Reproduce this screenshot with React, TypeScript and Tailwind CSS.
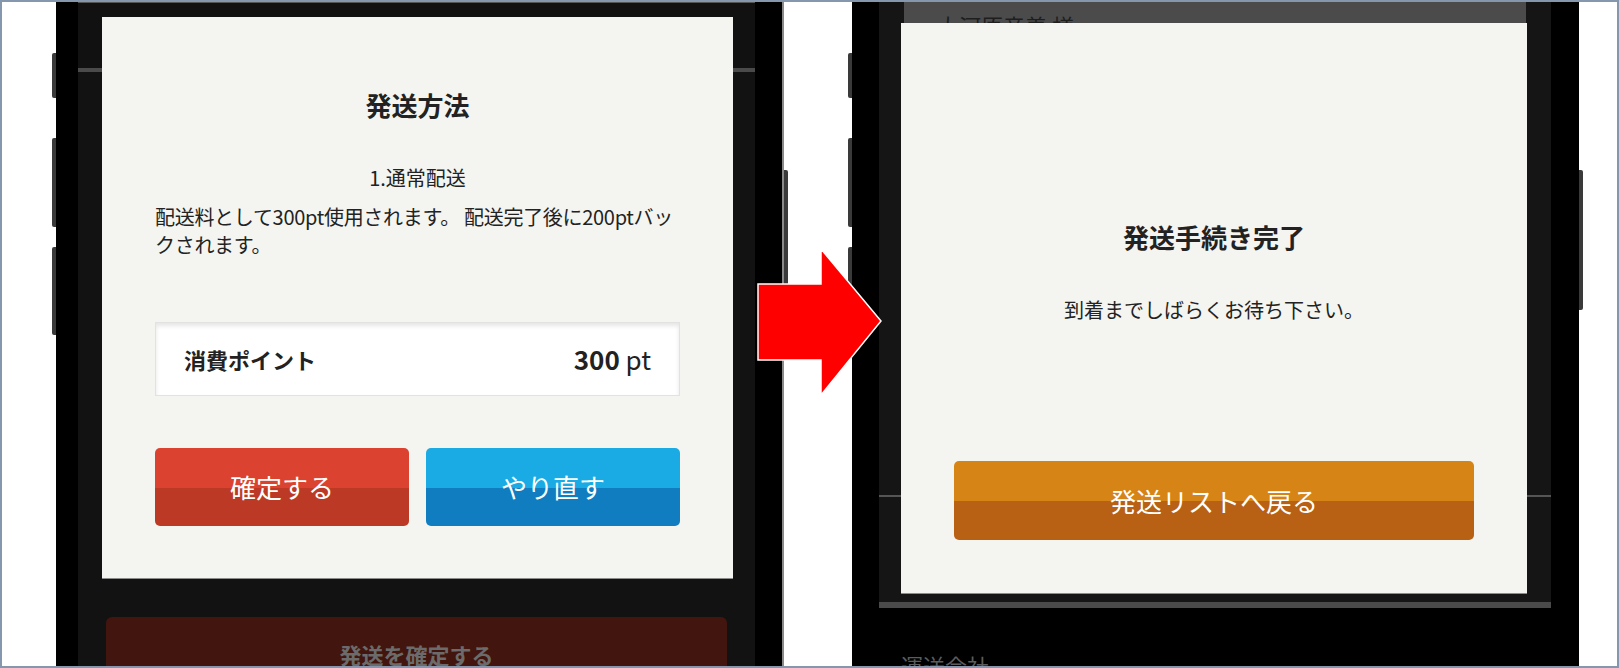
import React from 'react'

// two-tone pill used for every action button in the dialogs
function SplitButton({ label, className }: { label: string; className: string }) {
  return (
    <div
      className={`flex items-center justify-center rounded-[5px] text-white text-[26px] leading-[36px] ${className}`}
    >
      {label}
    </div>
  )
}

function LeftSideButtons() {
  return (
    <div className="flex w-[4px] shrink-0 flex-col">
      <div className="mt-[51px] h-[45px] rounded-l-[2px] bg-[#3a3a3a]" />
      <div className="mt-[40px] h-[89px] rounded-l-[2px] bg-[#3a3a3a]" />
      <div className="mt-[20px] h-[88px] rounded-l-[2px] bg-[#3a3a3a]" />
    </div>
  )
}

function RightSideButton() {
  return (
    <div className="flex w-[4px] shrink-0 flex-col">
      <div className="mt-[168px] h-[140px] rounded-r-[2px] bg-[#3a3a3a]" />
    </div>
  )
}

function ShippingMethodScreen() {
  return (
    <div className="relative flex w-[677px] shrink-0 flex-col bg-[#121212]">
      <div className="h-[1px] shrink-0 bg-[#555]" />
      <div className="h-[65px] shrink-0 bg-[#111]" />
      <div className="h-[4px] shrink-0 bg-[#4a4a4a]" />
      <div className="mx-[28px] mt-[545px] flex min-h-0 flex-1 justify-center overflow-hidden rounded-t-[6px] bg-[#43150f] pt-[22px]">
        <span className="text-[22px] font-bold leading-[30px] text-[#6b6b6b]">発送を確定する</span>
      </div>

      {/* confirm dialog */}
      <div className="absolute left-[24px] top-[15px] flex h-[561px] w-[631px] flex-col items-center bg-[#f4f4f0] px-[53px] text-[#222] shadow-[0_1px_0_#8c8c8c]">
        <h2 className="pt-[70px] text-[26px] font-bold leading-[36px]">発送方法</h2>
        <p className="mt-[41px] text-[20px] leading-[28px]">1.通常配送</p>
        <p className="mt-[11px] w-full text-[20px] leading-[28px] tracking-[-0.3px]">
          配送料として300pt使用されます。 配送完了後に200ptバックされます。
        </p>
        <div className="mt-[63px] flex h-[74px] w-full shrink-0 items-center justify-between border border-[#e2e2e2] bg-white px-[28px] shadow-[inset_0_3px_4px_rgba(0,0,0,0.10)]">
          <span className="text-[22px] font-bold leading-[30px]">消費ポイント</span>
          <span className="text-[26px] leading-[34px]">
            <span className="font-bold">300</span> pt
          </span>
        </div>
        <div className="mt-[52px] flex w-full shrink-0 gap-[17px]">
          <SplitButton
            label="確定する"
            className="h-[78px] flex-1 bg-[linear-gradient(to_bottom,#db4330_0%,#db4330_51%,#bc3a25_51%,#bc3a25_100%)]"
          />
          <SplitButton
            label="やり直す"
            className="h-[78px] flex-1 bg-[linear-gradient(to_bottom,#1aabe5_0%,#1aabe5_51%,#0f7dc0_51%,#0f7dc0_100%)]"
          />
        </div>
      </div>
    </div>
  )
}

function CompletedScreen() {
  return (
    <div className="relative flex w-[672px] shrink-0 flex-col bg-[#151515]">
      <div className="mx-[25px] h-[60px] shrink-0 bg-[#4b4b4b] pl-[33px] pt-[8px]">
        <span className="text-[22px] leading-[30px] text-[#1e1e1e]">大河原音義 様</span>
      </div>
      <div className="mt-[433px] h-[2px] shrink-0 bg-[#555]" />
      <div className="mt-[105px] h-[6px] shrink-0 bg-[#4a4a4a]" />
      <div className="min-h-0 flex-1 overflow-hidden bg-black pl-[22px] pt-[42px]">
        <span className="text-[22px] leading-[30px] text-[#5c5c5c]">運送会社</span>
      </div>

      {/* completion dialog */}
      <div className="absolute left-[22px] top-[21px] flex h-[570px] w-[626px] flex-col items-center bg-[#f4f4f0] px-[53px] text-[#222] shadow-[0_1px_0_#8c8c8c]">
        <h2 className="pt-[196px] text-[26px] font-bold leading-[36px]">発送手続き完了</h2>
        <p className="mt-[41px] text-[20px] leading-[28px]">到着までしばらくお待ち下さい。</p>
        <SplitButton
          label="発送リストへ戻る"
          className="mt-[137px] h-[79px] w-full shrink-0 bg-[linear-gradient(to_bottom,#d78416_0%,#d78416_50%,#b86013_50%,#b86013_100%)]"
        />
      </div>
    </div>
  )
}

export default function App() {
  return (
    <div className="relative flex h-[668px] w-[1619px] overflow-hidden border-2 border-[#8497ae] bg-white font-['Noto_Sans_CJK_JP','Noto_Sans',sans-serif]">
      <div className="w-[50px] shrink-0" />
      <LeftSideButtons />
      <div className="flex w-[726px] shrink-0 bg-black">
        <div className="w-[22px] shrink-0" />
        <ShippingMethodScreen />
        <div className="w-[27px] shrink-0" />
      </div>
      <div className="w-[2px] shrink-0 bg-[#8a8a8a]" />
      <RightSideButton />
      <div className="w-[60px] shrink-0" />
      <LeftSideButtons />
      <div className="flex w-[727px] shrink-0 bg-black">
        <div className="w-[27px] shrink-0" />
        <CompletedScreen />
        <div className="w-[28px] shrink-0" />
      </div>
      <RightSideButton />

      {/* step arrow between the two phones */}
      <svg
        className="absolute left-[754px] top-[244px]"
        width="130"
        height="152"
        viewBox="754 244 130 152"
      >
        <polygon
          points="756,282 819,282 819,247 879,319 819,393 819,358 756,358"
          fill="#ff0000"
          stroke="#ffffff"
          strokeWidth="1.5"
        />
      </svg>
    </div>
  )
}
